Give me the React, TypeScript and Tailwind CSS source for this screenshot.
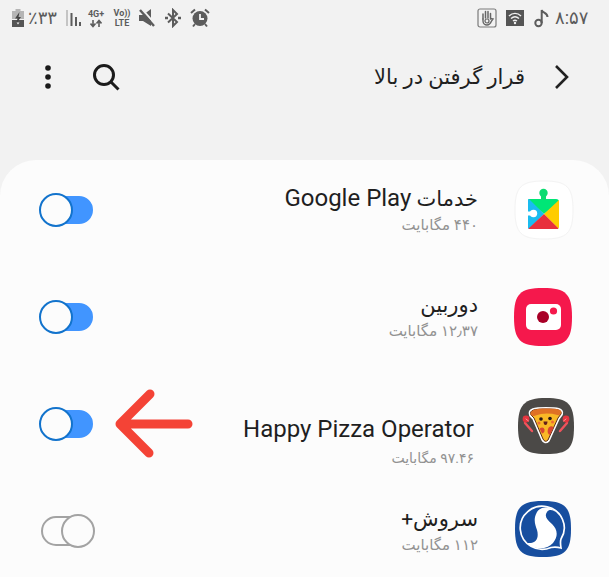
import type { ReactNode } from "react";

const FONT = "font-[Roboto,'DejaVu_Sans',sans-serif]";

function StatusBar() {
  return (
    <div dir="ltr" className="flex h-9 items-center justify-between pr-[18px] pl-3 text-[#5c5c5c]">
      <div className="flex items-center">
        <svg width="12" height="20" viewBox="0 0 12 20" aria-hidden="true">
          <path d="M3.5 1h5v2H12v8H0V3h3.500z" fill="#b5b5b5" />
          <path d="M0 12h12v7H0z" fill="#555" />
          <path d="M7.500 4 3 10.500h2.500L4 16l5-7H6.500z" fill="#444" />
          <path d="M4.500 14.500h3l-1.500 2z" fill="#eee" />
        </svg>
        <span className="w-9 pl-1 text-[18px] leading-5">٪۳۳</span>
        <svg className="ml-1" width="18" height="20" viewBox="0 0 18 20" aria-hidden="true">
          <path d="M3 2v16" stroke="#c4c4c4" strokeWidth="2" />
          <path d="M7.500 5v13M12 9v9M16 14v4" stroke="#5c5c5c" strokeWidth="2" />
        </svg>
        <div className="ml-1 flex w-5 flex-col items-center">
          <span className="text-[9px] leading-[10px] font-bold">4G+</span>
          <svg width="12" height="9" viewBox="0 0 12 9" aria-hidden="true" fill="none" stroke="#5c5c5c" strokeWidth="1.600">
            <path d="M3 1v6M.5 4.500 3 7.500l2.500-3M9 8V2M6.500 4.500 9 1.500l2.500 3" />
          </svg>
        </div>
        <div className="ml-1.5 flex w-5 flex-col items-center text-[9px] leading-[10px] font-bold">
          <span>Vo))</span>
          <span>LTE</span>
        </div>
        <svg className="ml-1.5" width="18" height="20" viewBox="0 0 18 20" aria-hidden="true">
          <path d="M1 7h4l8-6v17l-8-5H1z" fill="#5c5c5c" />
          <path d="m3 0 15 17" stroke="#f2f2f2" strokeWidth="2" />
          <path d="m2 2 14 16" stroke="#5c5c5c" strokeWidth="2.400" />
        </svg>
        <svg className="ml-2" width="18" height="20" viewBox="0 0 18 20" aria-hidden="true" fill="none" stroke="#5c5c5c" strokeWidth="2">
          <path d="m4 5.500 9 8.500-4 4V2l4 4-9 8.500" />
          <path d="M1 10h3M14 10h3" strokeWidth="2.500" />
        </svg>
        <svg className="ml-2" width="20" height="20" viewBox="0 0 20 20" aria-hidden="true">
          <circle cx="10" cy="10.500" r="7.500" fill="#5c5c5c" />
          <path d="m1 5 4-3.500M19 5l-4-3.500M5 16l-2 2.500M15 16l2 2.500" stroke="#5c5c5c" strokeWidth="2" />
          <path d="M10 6v5h4" fill="none" stroke="#f2f2f2" strokeWidth="1.800" />
        </svg>
      </div>
      <div className="flex items-center">
        <svg width="20" height="20" viewBox="0 0 20 20" aria-hidden="true" fill="none">
          <rect x="1" y="1" width="18" height="18" rx="2" stroke="#7b7b7b" strokeWidth="1.200" />
          <path d="M6 11V6M8.500 10V3.500M11 10V3.500M13.500 11V5.500" stroke="#666" strokeWidth="1.500" strokeLinecap="round" />
          <path d="M6 10.500v2.500c0 2.500 2 4 4 4s3.500-1.500 4.500-4l1.500-2-2.500-.5" stroke="#666" strokeWidth="1.400" />
          <circle cx="10" cy="13" r="2" stroke="#666" strokeWidth="1.200" />
        </svg>
        <svg className="ml-2" width="20" height="20" viewBox="0 0 20 20" aria-hidden="true" fill="none">
          <rect x="1" y="2" width="18" height="16" fill="#555" />
          <path d="M4 8c3.500-3.500 8.500-3.500 12 0M6 10.500c2.500-2.300 5.500-2.300 8 0M8 13c1.300-1 2.700-1 4 0" stroke="#f2f2f2" strokeWidth="1.400" />
          <circle cx="10" cy="15" r="1.200" fill="#f2f2f2" />
        </svg>
        <svg className="ml-2" width="18" height="20" viewBox="0 0 18 20" aria-hidden="true" fill="none" stroke="#5c5c5c" strokeWidth="2">
          <circle cx="5.500" cy="15" r="3.200" />
          <path d="M8.700 15V2c.5 3 5.800 2.500 5.800 7" />
        </svg>
        <span className="ml-1 w-9 text-[18px] leading-5">۸:۵۷</span>
      </div>
    </div>
  );
}

function GooglePlayIcon() {
  return (
    <svg width="60" height="60" viewBox="0 0 60 60" aria-hidden="true">
      <path d="M30 1C53 1 59 7 59 30S53 59 30 59 1 53 1 30 7 1 30 1z" fill="#fff" stroke="#f3f3f3" />
      <path d="M15 19h27q3 0 3 3L30 34 14 20z" fill="#00e676" />
      <circle cx="29.500" cy="13" r="4.200" fill="#0cdb70" />
      <path d="M27 15h5v5h-5z" fill="#0cdb70" />
      <path d="M14 20q0-1 1-1l15 15-15 15q-1-.5-1-1z" fill="#1abcf0" />
      <path d="M45 20v27q0 1-1 1.500L30 34z" fill="#fc0" />
      <path d="m30 34 14.500 14.500q-.5.500-2 .5H16q-1.500 0-1.500-.5z" fill="#e8303c" />
      <circle cx="19.500" cy="33.500" r="3.700" fill="#fff" />
      <path d="M13 31.500h6v4h-6z" fill="#fff" />
    </svg>
  );
}

function CameraIcon() {
  return (
    <svg width="60" height="60" viewBox="0 0 60 60" aria-hidden="true">
      <path d="M29 1C52 1 58 7 58 30S52 59 29 59 0 53 0 30 6 1 29 1z" fill="#f5184c" />
      <rect x="12" y="17" width="35" height="26" rx="5" fill="#fff" />
      <circle cx="29" cy="30" r="6" fill="#a90027" />
      <circle cx="39.500" cy="24" r="3.600" fill="#f5184c" />
    </svg>
  );
}

function PizzaIcon() {
  return (
    <svg width="60" height="60" viewBox="0 0 60 60" aria-hidden="true">
      <path d="M32 4C54 4 60 10 60 32.500S54 60 32 60 4 54 4 32.500 10 4 32 4z" fill="#4b4947" />
      <path d="M17 21c-2-5 3-6 15-6s16 1 15 5l-3 4-10 22q-3 3-5-1L20 24z" fill="#fff" stroke="#fff" strokeWidth="4" strokeLinejoin="round" />
      <path d="M17 21c-2-5 3-6 15-6s16 1 15 5l-3 4-10 22q-3 3-5-1L20 24z" fill="#f9b826" stroke="#5a2c18" strokeWidth="1" />
      <path d="M16.500 20.500C16 16 22 14.500 32 14.500s16 .5 15.500 4.500q-2 3-4 2-12-3-22 .5-3 1.500-5-1z" fill="#df7125" />
      <circle cx="27" cy="25" r="1.800" fill="#2a1715" />
      <circle cx="36" cy="24.500" r="1.800" fill="#2a1715" />
      <path d="M29.500 27.500h4q-.2 3.500-2 3.500t-2-3.500z" fill="#652019" />
      <circle cx="25" cy="29" r="1.500" fill="#ee6b36" />
      <circle cx="38.500" cy="28" r="1.500" fill="#ee6b36" />
      <path d="M25.500 34.500q4-2.500 5 1 .5 3-2.500 4z" fill="#d84630" />
      <path d="M34 35c1-3 4-3.500 5.500-1.500L36 41c-2-.5-3-3-2-6z" fill="#d84630" />
      <path d="m11 29 7 8M53 29l-7 8" fill="none" stroke="#ef535c" strokeWidth="2.400" strokeLinecap="round" />
      <circle cx="12" cy="25" r="3.400" fill="#e4353f" />
      <circle cx="52" cy="25" r="3.400" fill="#e4353f" />
      <path d="m12 25 2.500 2M52 25l-2.500 2" stroke="#ff9a9a" strokeLinecap="round" />
    </svg>
  );
}

function SoroushIcon() {
  return (
    <svg width="60" height="60" viewBox="0 0 60 60" aria-hidden="true">
      <path d="M29 0C51 0 57 6 57 28S51 56 29 56 1 50 1 28 7 0 29 0z" fill="#174e9f" />
      <path d="M37 46.500A22 21.500 0 1 1 47 38q-1 3 0 9-5-1.500-10-.5z" fill="none" stroke="#fff" strokeWidth="1.700" />
      <path d="M42 11C36 5 27 5 23 11c-4 7-2 12 0 18 2 7 0 14-10 13 7 7 20 7 26 0 6-8 4-14-1-19-5-4-8-8-5-12 2-3 6-2 9 0z" fill="#fff" />
    </svg>
  );
}

function Toggle({ label, on }: { label: string; on: boolean }) {
  return (
    <label dir="ltr" className="relative block h-[34px] w-14 shrink-0 cursor-pointer">
      <input type="checkbox" role="switch" aria-label={label} defaultChecked={on} className="peer sr-only" />
      <span className="absolute inset-x-[2px] inset-y-[2px] rounded-full border-2 border-[#a3a3a3] peer-checked:inset-y-[3px] peer-checked:border-[#4195ff] peer-checked:bg-[#4195ff]" />
      <span className="absolute top-0 right-0 size-[34px] rounded-full border-2 border-[#a3a3a3] bg-[#fcfcfc] peer-checked:right-auto peer-checked:left-0 peer-checked:border-[#1273cc]" />
    </label>
  );
}

function PointerArrow() {
  return (
    <svg className="ml-5 shrink-0" width="78" height="72" viewBox="0 0 78 72" aria-hidden="true">
      <path d="M73 36H6M35 6 5 36l29 29" fill="none" stroke="#f44336" strokeWidth="9" strokeLinecap="round" strokeLinejoin="round" />
    </svg>
  );
}

type App = { name: ReactNode; label: string; size: string; on: boolean; icon: ReactNode; marked?: boolean };

const apps: App[] = [
  {
    name: (
      <>
        خدمات <span className="text-2xl leading-7">Google Play</span>
      </>
    ),
    label: "خدمات Google Play",
    size: "۴۴۰ مگابایت",
    on: true,
    icon: <GooglePlayIcon />,
  },
  { name: "دوربین", label: "دوربین", size: "۱۲٫۳۷ مگابایت", on: true, icon: <CameraIcon /> },
  {
    name: <span className="text-2xl leading-7">Happy Pizza Operator</span>,
    label: "Happy Pizza Operator",
    size: "۹۷.۴۶ مگابایت",
    on: true,
    icon: <PizzaIcon />,
    marked: true,
  },
  { name: "سروش+", label: "سروش+", size: "۱۱۲ مگابایت", on: false, icon: <SoroushIcon /> },
];

export default function App() {
  return (
    <div dir="rtl" className={`flex min-h-screen flex-col bg-[#f2f2f2] text-[#1f1f1f] ${FONT}`}>
      <StatusBar />
      <header className="flex h-[124px] items-start pt-[21px] pr-9 pl-8">
        <button type="button" aria-label="بازگشت" className="flex h-10 w-6 items-center justify-center">
          <svg width="18" height="26" viewBox="0 0 18 26" fill="none" stroke="#222" strokeWidth="2.600">
            <path d="m4 2 11 11L4 24" />
          </svg>
        </button>
        <h1 className="mr-6 flex-1 text-[21px] leading-10">قرار گرفتن در بالا</h1>
        <button type="button" aria-label="جستجو" className="flex size-10 items-center justify-center">
          <svg width="28" height="28" viewBox="0 0 28 28" fill="none" stroke="#1b1b1b" strokeWidth="3">
            <circle cx="12" cy="12" r="9.500" />
            <path d="m19 19 7.500 7.500" />
          </svg>
        </button>
        <button type="button" aria-label="گزینه‌های بیشتر" className="mr-[22px] flex h-10 w-8 items-center justify-center">
          <svg width="6" height="26" viewBox="0 0 6 26" fill="#1b1b1b">
            <circle cx="3" cy="4" r="2.800" />
            <circle cx="3" cy="13" r="2.800" />
            <circle cx="3" cy="22" r="2.800" />
          </svg>
        </button>
      </header>
      <main className="flex-1 rounded-t-[36px] bg-[#fcfcfc] pt-5 pr-[35px] pb-4 pl-[39px]">
        <ul className="flex flex-col gap-[47px]">
          {apps.map((app) => (
            <li key={app.label} className="flex h-[60px] items-center">
              <div className="shrink-0">{app.icon}</div>
              <div className={`flex-1 ${app.marked ? "pt-9 pr-10" : "pr-9"}`}>
                <h2 className="text-[21px] leading-7 whitespace-nowrap">{app.name}</h2>
                <p className={`leading-6 text-[#929292] ${app.marked ? "mt-0.5 text-[14px]" : "text-[15px]"}`}>{app.size}</p>
              </div>
              {app.marked && <PointerArrow />}
              <Toggle label={app.label} on={app.on} />
            </li>
          ))}
        </ul>
      </main>
    </div>
  );
}
